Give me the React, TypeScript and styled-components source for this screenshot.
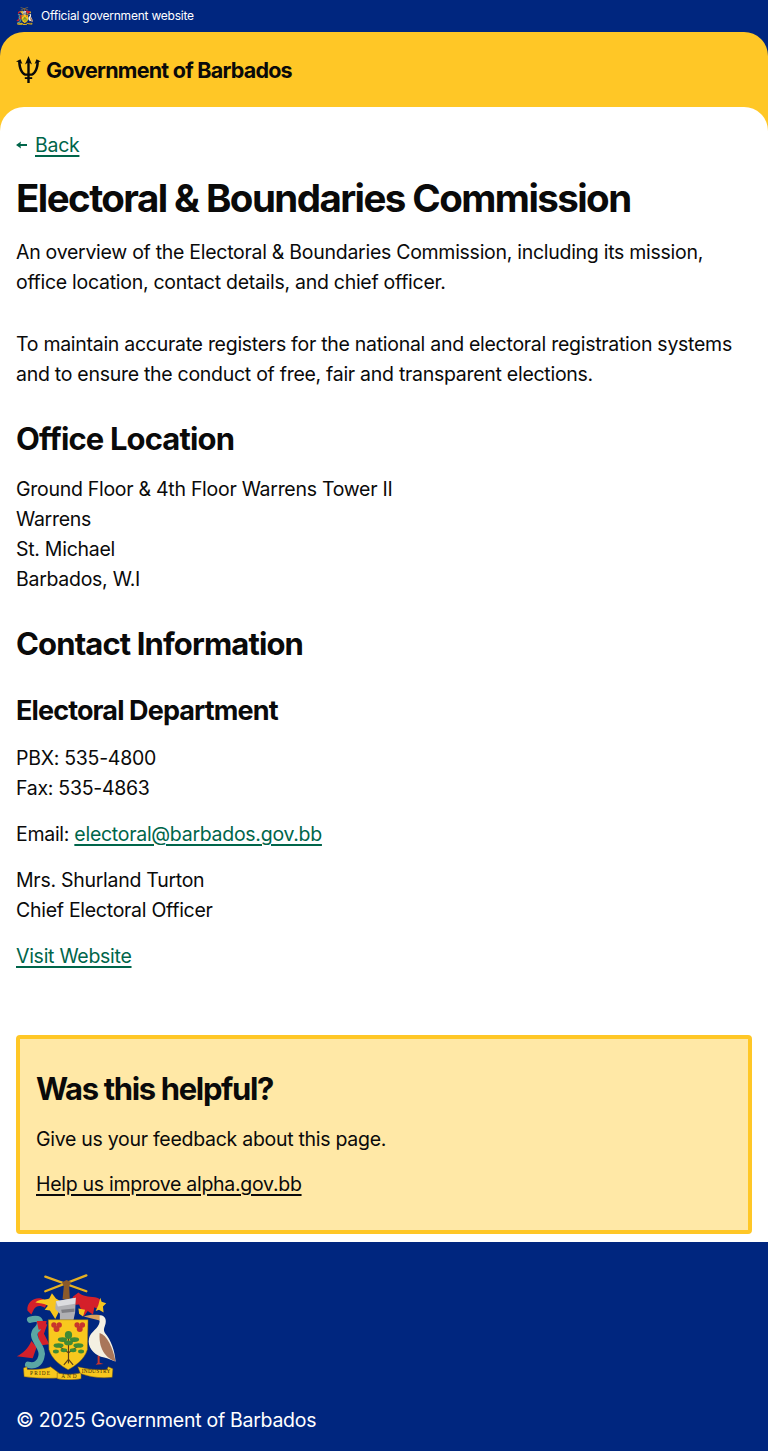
import styled, { createGlobalStyle } from "styled-components";

const GlobalStyle = createGlobalStyle`
  * { box-sizing: border-box; }
  html, body { margin: 0; padding: 0; background: #00267f; }
  body {
    font-family: "Inter", "Noto Sans", sans-serif;
    font-size: 19.5px;
    line-height: 30px;
    letter-spacing: -0.28px;
    color: #0a0a0a;
  }
`;

const TopBar = styled.div`
  height: 32px;
  display: flex;
  align-items: center;
  gap: 8px;
  padding: 0 16px;
  color: #fff;
  font-size: 12px;
  letter-spacing: -0.22px;
`;

const Shell = styled.div`
  background: #ffc726;
  border-radius: 24px 24px 0 0;
`;

const Masthead = styled.header`
  height: 75px;
  display: flex;
  align-items: center;
  padding: 0 16px;
  gap: 5px;
  font-size: 21.5px;
  font-weight: 700;
  letter-spacing: -0.78px;
`;

const Main = styled.main`
  background: #fff;
  border-radius: 24px 24px 0 0;
  padding: 23px 16px 8px;
`;

const BackRow = styled.div`
  display: flex;
  align-items: center;
  gap: 8px;
`;

const TextLink = styled.a<{ $tone?: string }>`
  color: ${(p) => p.$tone ?? "#00654a"};
  text-decoration: underline;
  text-decoration-thickness: 1.5px;
  text-underline-offset: 2.5px;
`;

const Title = styled.h1`
  margin: 14px 0 15px;
  font-size: 38.5px;
  line-height: 48px;
  font-weight: 700;
  letter-spacing: -1.57px;
`;

const Para = styled.p<{ $after?: number }>`
  margin: 0 0 ${(p) => p.$after ?? 16}px;
`;

const SectionTitle = styled.h2<{ $after?: number; $track?: number }>`
  margin: 0 0 ${(p) => p.$after ?? 15}px;
  font-size: 31px;
  line-height: 40px;
  font-weight: 700;
  letter-spacing: ${(p) => p.$track ?? -0.87}px;
`;

const SubTitle = styled.h3`
  margin: 0 0 14px;
  font-size: 27px;
  line-height: 36px;
  font-weight: 700;
  letter-spacing: -0.88px;
`;

const Feedback = styled.aside`
  margin-top: 64px;
  background: #ffe8a6;
  border: 4px solid #ffc726;
  border-radius: 4px;
  padding: 30px 16px 31px;
`;

const Footer = styled.footer`
  background: #00267f;
  color: #fff;
  padding: 32px 16px 16px;
  display: flex;
  flex-direction: column;
  align-items: flex-start;
  gap: 25px;
`;

function Arms({ width, height }: { width: number; height: number }) {
  return (
    <svg width={width} height={height} viewBox="48 42 304 320" aria-hidden="true">
      {/* crossed canes and fist */}
      <g stroke="#e5b022" strokeWidth="7" strokeLinecap="round">
        <path d="M136 50 L260 94" />
        <path d="M136 94 L260 46" />
      </g>
      <path d="M188 118 L192 78 L186 68 L200 60 L214 66 L208 80 L210 118 Z" fill="#8a5a2b" />

      {/* mantling, left */}
      <path d="M82 152 C80 128 100 112 124 116 C140 120 144 134 134 144 C122 136 110 136 102 148 L94 164 Z" fill="#d4202a" />
      <path d="M106 128 C122 114 138 122 148 116 L156 100 L168 116 L182 124 L168 136 L178 154 L166 178 L150 152 L134 150 L144 138 C132 130 120 130 106 128 Z" fill="#f7c51e" />

      {/* mantling, right */}
      <path d="M208 136 L220 110 L236 98 C248 110 266 110 286 112 C304 114 310 128 300 150 L284 142 L280 164 L264 154 L252 170 L238 134 Z" fill="#d4202a" />
      <path d="M302 114 L306 126 L320 130 L310 140 L312 158 L298 150 L288 154 L296 136 Z" fill="#f7c51e" />
      <path d="M236 146 L256 150 L250 170 L238 162 Z" fill="#f7c51e" />

      {/* helm */}
      <path d="M168 124 L228 114 L226 158 L220 186 L180 186 L180 162 L166 148 Z" fill="#b0b0b4" />
      <path d="M168 124 L228 114 L226 132 L174 140 Z" fill="#dcdcdf" />
      <path d="M184 150 L224 146 L224 156 L186 160 Z" fill="#7f7f84" />

      {/* dolphin */}
      <path d="M94 244 L110 262 L98 296 L50 290 C68 282 84 268 94 244 Z" fill="#d4202a" />
      <path d="M110 196 L142 194 L132 222 L148 254 L118 258 Z" fill="#d4202a" />
      <path
        d="M90 180 C130 168 124 198 106 214 C90 240 134 262 124 292 C120 312 104 322 84 316"
        fill="none"
        stroke="#5aa7a4"
        strokeWidth="19"
        strokeLinecap="round"
      />
      <path d="M110 184 L140 184 L136 206 L116 210 Z" fill="#d4202a" />

      {/* pelican */}
      <path d="M294 288 L300 288 L300 310 L312 314 L288 316 L294 310 Z" fill="#c8352c" />
      <path d="M296 168 C314 162 324 180 316 198 C312 208 312 212 316 220 C334 240 346 274 348 306 C330 300 318 294 304 292 C282 284 262 262 268 236 C272 216 298 206 300 186 Z" fill="#f4f0e2" />
      <path d="M300 220 C322 226 340 264 348 306 C326 298 296 276 300 220 Z" fill="#a9765a" />
      <path d="M252 170 C268 164 284 164 300 166 L300 182 C284 178 268 174 252 170 Z" fill="#d9a05a" />

      {/* shield */}
      <path d="M145 180 L265 180 L263 270 C255 300 225 320 205 331 C185 320 155 300 147 270 Z" fill="#f8c81e" stroke="#8a6a10" strokeWidth="1.5" />
      <g fill="#c8352c">
        <circle cx="162" cy="196" r="8" />
        <circle cx="178" cy="196" r="8" />
        <circle cx="170" cy="208" r="9" />
        <circle cx="232" cy="196" r="8" />
        <circle cx="248" cy="196" r="8" />
        <circle cx="240" cy="208" r="9" />
      </g>
      <g fill="none" stroke="#5b3d18" strokeWidth="3.5">
        <path d="M206 222 L206 312" />
        <path d="M206 300 L192 316 M206 300 L220 316" />
        <path d="M206 280 L180 262 M206 280 L232 262 M206 256 L186 240 M206 256 L226 240" />
      </g>
      <g fill="#3f8a35">
        <ellipse cx="206" cy="226" rx="11" ry="12" />
        <ellipse cx="188" cy="240" rx="14" ry="7" />
        <ellipse cx="224" cy="240" rx="14" ry="7" />
        <ellipse cx="176" cy="258" rx="15" ry="7" />
        <ellipse cx="206" cy="250" rx="13" ry="7" />
        <ellipse cx="236" cy="258" rx="15" ry="7" />
        <ellipse cx="168" cy="276" rx="9" ry="6" />
        <ellipse cx="244" cy="276" rx="9" ry="6" />
        <ellipse cx="192" cy="272" rx="10" ry="6" />
        <ellipse cx="220" cy="272" rx="10" ry="6" />
      </g>

      {/* motto ribbons */}
      <path d="M70 326 L80 322 L82 330 C110 332 135 328 152 322 L176 340 L176 356 C140 358 105 356 72 352 Z" fill="#f8c81e" stroke="#7a5a10" strokeWidth="1.5" />
      <path d="M172 340 C190 346 222 346 244 340 L244 358 C222 362 190 362 172 358 Z" fill="#f8c81e" stroke="#7a5a10" strokeWidth="1.5" />
      <path d="M234 322 C262 330 295 332 322 330 L326 322 L340 328 L338 354 C300 358 268 352 242 342 Z" fill="#f8c81e" stroke="#7a5a10" strokeWidth="1.5" />
      <g fontFamily="Liberation Serif, serif" fontSize="16" fill="#3a2a08">
        <text x="90" y="348" textLength="60">PRIDE</text>
        <text x="184" y="356" textLength="46">AND</text>
        <text x="246" y="342" textLength="86">INDUSTRY</text>
      </g>
    </svg>
  );
}

function Trident() {
  return (
    <svg width="25" height="27" viewBox="0 0 25 27" aria-hidden="true">
      <g fill="#0a0a0a">
        <path d="M12.5 0 L16 8.5 L13.7 7 L13.7 27 L11.3 27 L11.3 7 L9 8.5 Z" />
        <path d="M0 5.5 L4.5 3.2 L6.4 8 L4.7 6.9 C5 11.5 6.6 16 9.5 17.4 L15.5 17.4 C18.4 16 20 11.5 20.3 6.9 L18.6 8 L20.5 3.2 L25 5.5 L22.9 5.9 C22.8 12 20.5 18 16.2 19.8 L8.8 19.8 C4.5 18 2.2 12 2.1 5.9 Z" />
        <rect x="8.8" y="21.2" width="7.4" height="1.8" />
      </g>
    </svg>
  );
}

function BackArrow() {
  return (
    <svg width="11" height="8" viewBox="0 0 11 8" aria-hidden="true">
      <path d="M0 4 L5 0.5 L4.5 3 L11 3 L11 5 L4.5 5 L5 7.5 Z" fill="#00654a" />
    </svg>
  );
}

export default function App() {
  return (
    <>
      <GlobalStyle />
      <TopBar>
        <Arms width={17} height={18} />
        Official government website
      </TopBar>
      <Shell>
        <Masthead>
          <Trident />
          Government of Barbados
        </Masthead>
        <Main>
          <BackRow>
            <BackArrow />
            <TextLink href="#">Back</TextLink>
          </BackRow>
          <Title>Electoral &amp; Boundaries Commission</Title>
          <Para $after={32}>
            An overview of the Electoral &amp; Boundaries Commission, including its mission, office
            location, contact details, and chief officer.
          </Para>
          <Para $after={30}>
            To maintain accurate registers for the national and electoral registration systems and
            to ensure the conduct of free, fair and transparent elections.
          </Para>
          <SectionTitle>Office Location</SectionTitle>
          <Para $after={30}>
            Ground Floor &amp; 4th Floor Warrens Tower II
            <br />
            Warrens
            <br />
            St. Michael
            <br />
            Barbados, W.I
          </Para>
          <SectionTitle $after={29}>Contact Information</SectionTitle>
          <SubTitle>Electoral Department</SubTitle>
          <Para>
            PBX: 535-4800
            <br />
            Fax: 535-4863
          </Para>
          <Para>
            Email: <TextLink href="#">electoral@barbados.gov.bb</TextLink>
          </Para>
          <Para>
            Mrs. Shurland Turton
            <br />
            Chief Electoral Officer
          </Para>
          <Para $after={0}>
            <TextLink href="#">Visit Website</TextLink>
          </Para>
          <Feedback>
            <SectionTitle $track={-1.35}>Was this helpful?</SectionTitle>
            <Para $after={15}>Give us your feedback about this page.</Para>
            <TextLink href="#" $tone="#0a0a0a">
              Help us improve alpha.gov.bb
            </TextLink>
          </Feedback>
        </Main>
      </Shell>
      <Footer>
        <Arms width={101} height={106} />
        <span>© 2025 Government of Barbados</span>
      </Footer>
    </>
  );
}
